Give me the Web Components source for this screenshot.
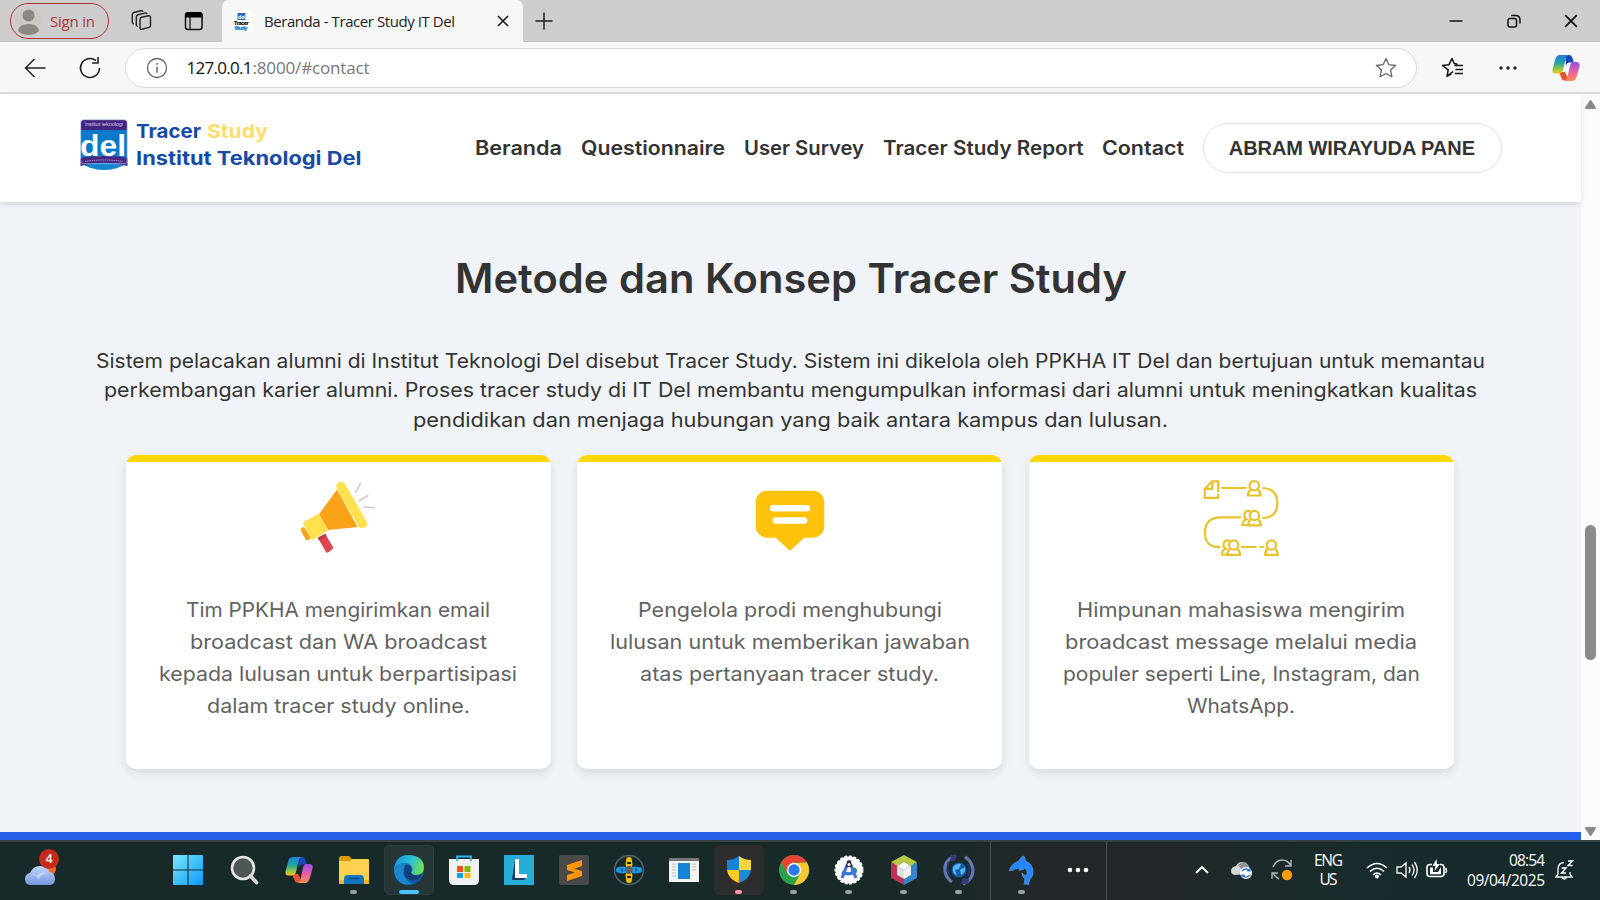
<!DOCTYPE html>
<html lang="id">
<head>
<meta charset="utf-8">
<title>Beranda - Tracer Study IT Del</title>
<style>
html,body{margin:0;height:100%;overflow:hidden}
body{font-family:"Inter","Open Sans",sans-serif;color:#333}
</style>
</head>
<body>
<desktop-screen></desktop-screen>
<script>
const icons = {
tabs:[24,24,`<g fill="none" stroke="#222" stroke-width="1.400" stroke-linejoin="round" stroke-linecap="round"><path d="M11.500 8.200l7-1.500q2-.3 2 1.700v8q0 1.500-1.500 2l-7 1.900q-2 .4-2-1.600v-8.300q0-1.800 1.500-2.200z"/><path d="M7.300 17.500q-1-.6-1-2V7.800q0-1.500 1.500-2l7-1.700q1.500-.3 2 .6M3.300 14.800q-1-.6-1-2V5.500q0-1.500 1.500-2l7-1.700q1.500-.3 2 .4"/></g>`],
pane:[20,20,`<rect x="1.500" y="2" width="16.500" height="16.500" rx="2.500" fill="none" stroke="#111" stroke-width="1.500"/><path d="M1 6.500V4q0-3 3-3h11.500q3 0 3 3v2.500z" fill="#000"/><path d="M6 6v12" stroke="#111" stroke-width="1.300"/>`],
fav:[20,20,`<path fill="#fff" d="M0 0h20v20H0z"/><rect x="5.500" y="2" width="8" height="7" fill="#2868bc"/><text x="6" y="7.500" font-size="5" font-weight="700" fill="#fff" font-family="Inter,sans-serif">del</text><text x="1.800" y="14" font-size="5.200" font-weight="900" textLength="15" fill="#111" font-family="Inter,sans-serif">Tracer</text><text x="2.500" y="18.500" font-size="5.200" font-weight="900" textLength="13" fill="#1576ca" font-family="Inter,sans-serif">Study</text>`],
close:[12,12,`<path d="M1 1l10 10M11 1L1 11" stroke="#111" stroke-width="1.500"/>`],
plus:[18,18,`<path d="M9 .5v17M.5 9h17" stroke="#222" stroke-width="1.500"/>`],
min:[14,14,`<path d="M.5 7h13" stroke="#111" stroke-width="1.500"/>`],
restore:[14,14,`<rect x="1" y="4.500" width="8.500" height="8.500" rx="2" fill="none" stroke="#111" stroke-width="1.500"/><path d="M4 1.500h4.500q4.500 0 4.500 4.500v3.500" fill="none" stroke="#111" stroke-width="1.500"/>`],
back:[22,22,`<path d="M10.500 2L1.500 11l9 9M2 11h19.500" fill="none" stroke="#222" stroke-width="1.500"/>`],
reload:[22,22,`<path d="M20.500 11A9.500 9.500 0 1 1 17 3.600M19 0v6h-6" fill="none" stroke="#222" stroke-width="1.600"/>`],
info:[22,22,`<circle cx="11" cy="11" r="9.500" fill="none" stroke="#666" stroke-width="1.300"/><path d="M11 9.700v6M11 6v1.700" stroke="#666" stroke-width="1.500"/>`],
star:[22,22,`<path d="M11 1.500l2.900 6.200 6.700.8-5 4.600 1.300 6.700-5.900-3.300-5.900 3.300 1.300-6.700-5-4.600 6.700-.8z" fill="none" stroke="#666" stroke-width="1.300" stroke-linejoin="round"/>`],
favs:[22,22,`<path d="M12 14.500l-6 4.800 1.200-6.500L1.500 8.500l6.500-.8L11 1.500l2.300 5 3.200.8M13.500 8.500H22M14.500 12.500H22M14 16.500h8M6 19.300l5-3" fill="none" stroke="#111" stroke-width="1.500" stroke-linejoin="round"/>`],
dots:[18,6,`<g fill="#222"><circle cx="2" cy="3" r="1.700"/><circle cx="9" cy="3" r="1.700"/><circle cx="16" cy="3" r="1.700"/></g>`],
dotsw:[22,6,`<g fill="#fff"><circle cx="3" cy="3" r="2.300"/><circle cx="11" cy="3" r="2.300"/><circle cx="19" cy="3" r="2.300"/></g>`],
copilot:[28,28,`<defs><linearGradient id="a" x1="0" y1="0" x2="0" y2="1"><stop offset="0" stop-color="#1e82dc"/><stop offset=".45" stop-color="#25a5a0"/><stop offset=".75" stop-color="#8fc742"/><stop offset="1" stop-color="#f4c51c"/></linearGradient><linearGradient id="b" x1="0" y1="0" x2="0" y2="1"><stop offset="0" stop-color="#9a50e8"/><stop offset=".45" stop-color="#df5dae"/><stop offset="1" stop-color="#ff8a52"/></linearGradient></defs><path d="M13 1h4.500q2 0 3 3l1.300 4.500H17q-2 0-3 3z" fill="#1848b8"/><path d="M7 18h6l2 4q1 4 4 4.500h-7q-2 0-2.800-3z" fill="#e5542f"/><path d="M8 1h8.500q-2 .5-3 4l-2.500 11q-1 3.500-4 3.500H3.500Q-.3 19.500.6 15L3.500 4.500Q4.500 1 8 1z" fill="url(#a)"/><path d="M20.500 8h4q3.500 0 3.200 4l-3 10.500Q23.500 27 19.500 27H11.500q3 0 4-4l2.500-11q1-4 2.500-4z" fill="url(#b)"/>`],
weather:[32,22,`<defs><linearGradient id="a" x1="0" y1="0" x2="0" y2="1"><stop stop-color="#c2d5fc"/><stop offset="1" stop-color="#7896dc"/></linearGradient></defs><circle cx="26" cy="5" r="6" fill="#f36b22"/><path d="M7 21q-6 0-6-6 0-5 5-6Q9 2 16 2q8 0 9.500 6Q31 9 31 15q0 6-6 6z" fill="url(#a)"/><path d="M6 10q5-1 7 2 3-5 10-3-7 1-8 6-4-5-9-5z" fill="#e4edff" opacity=".55"/>`],
start:[30,30,`<defs><linearGradient id="a" gradientUnits="userSpaceOnUse" x1="0" y1="0" x2="30" y2="30"><stop stop-color="#78e9ff"/><stop offset="1" stop-color="#0c98f8"/></linearGradient></defs><path d="M1 0h13.500v14.500H0V1q0-1 1-1zM15.500 0H29q1 0 1 1v13.500H15.500zM0 15.500h14.500V30H1q-1 0-1-1zM15.500 15.500H30V29q0 1-1 1H15.500z" fill="url(#a)"/>`],
search:[30,30,`<circle cx="14" cy="13" r="11" fill="#4e5756" stroke="#e5e5e5" stroke-width="2.600"/><path d="M21.500 21l6 6.500" stroke="#d8d8d8" stroke-width="3.800" stroke-linecap="round"/>`],
folder:[30,28,`<path d="M0 2q0-2 2-2h8l3 3-2 5H0z" fill="#d59b08"/><path d="M0 5h11l2-2h16q1 0 1 1v23q0 1-1 1H1q-1 0-1-1z" fill="#ffd151"/><path d="M0 24h30v3q0 1-1 1H1q-1 0-1-1z" fill="#f4b629"/><path d="M5 28v-5q0-4 4-4h12q4 0 4 4v5z" fill="#1474c4"/><path d="M9.500 22.500h11" stroke="#074582" stroke-width="1.300"/>`],
edge:[30,30,`<defs><linearGradient id="a" x1="0" y1=".2" x2="1" y2=".5"><stop stop-color="#1f98df"/><stop offset=".55" stop-color="#29bfd2"/><stop offset="1" stop-color="#6ee054"/></linearGradient><linearGradient id="b" x1="0" y1="0" x2="1" y2="1"><stop stop-color="#188bd5"/><stop offset="1" stop-color="#0c4f9e"/></linearGradient></defs><circle cx="15" cy="15" r="15" fill="url(#b)"/><path d="M.3 13Q2 0 15 0 30 1 30 13q-.5 7-8 7-5-.2-5-2.500 2-1.500 1.500-4Q17 8 11 8 3 8 .3 13z" fill="url(#a)"/><path d="M11 10q5-1 6.500 4-1 3 0 4 1 2.500 5 2.500 3 0 5-1.500 1 .5 0 2-5 6-12 4-6-3-5.500-9z" fill="#123f78"/><path d="M.3 13Q4 7 12 9.500 8 12 9 18q1.500 8 9 11Q7 31.500 2 23-.5 18 .3 13z" fill="#1a86cf"/>`],
store:[30,30,`<path d="M0 4h30v21q0 5-5 5H5q-5 0-5-5z" fill="#f1f1f1"/><path d="M8 6V1.500h14V6" fill="none" stroke="#32b3ee" stroke-width="1.800"/><path d="M8 11h6v6H8z" fill="#f25022"/><path d="M15.500 11h6v6h-6z" fill="#7fba00"/><path d="M8 18h6v5H8z" fill="#00a4ef"/><path d="M15.500 18h6v5h-6z" fill="#ffb900"/>`],
lbox:[30,30,`<path fill="#27add8" d="M0 0h30v30H0z"/><path d="M11 4l-3 21 4-3V5zM8 25h12l3-3H12z" fill="#173c62"/><path d="M11 4h4v15h8v4H11z" fill="#fff"/>`],
sublime:[30,30,`<rect width="30" height="30" rx="2" fill="#494949"/><path d="M8 10l15-5v6l-8 2.700 8 2.300v5L8 26v-6l8-2.500-8-2.500z" fill="#ff9800"/>`],
circle:[32,32,`<circle cx="16" cy="16" r="14.500" fill="none" stroke="#53666b" stroke-width="1.400"/><path d="M13.500 4q2.500-2 5 0l1 6-1 6 1 6-1 6q-2.500 2-5 0l-1-6 1-6-1-6z" fill="#ffbd0b"/><path d="M4 13.500l6-1 6 1 6-1 6 1q2 2.500 0 5l-6 1-6-1-6 1-6-1q-2-2.500 0-5z" fill="#169cef"/><circle cx="16" cy="16" r="4" fill="#5c6365"/><path d="M14 9h4M14 23h4" stroke="#222" stroke-width="1.800"/><path d="M9 14.500v3M23 14.500v3" stroke="#124e7c" stroke-width="1.800"/>`],
win:[30,24,`<path fill="#f4f4f4" d="M0 0h30v24H0z"/><path d="M0 0h30v3H0z" fill="#777"/><rect x="9" y="5" width="12" height="16" fill="#1684d4"/><path d="M3 6h4M3 9h4M3 12h4M3 15h4M3 18h4M23 6h4M23 9h4M23 12h4" stroke="#c0c0c0"/>`],
shield:[26,28,`<path d="M13 1v13H1V4q7 0 12-4z" fill="#1684d4"/><path d="M13 0q5 4 12 4v10H13z" fill="#ffd43d"/><path d="M1 14h12v13Q2 23 1 14z" fill="#ffc928"/><path d="M13 14h12q-1 9-12 13z" fill="#188ad8"/>`],
chrome:[30,30,`<circle cx="15" cy="15" r="15" fill="#2aa24c"/><path d="M2 7.500A15 15 0 0 1 28 7.500H15L9 19z" fill="#e64435"/><path d="M28 7.500A15 15 0 0 1 15 30l6.500-11.500L17 8z" fill="#fcc831"/><circle cx="15" cy="15" r="7.200" fill="#fff"/><circle cx="15" cy="15" r="5.700" fill="#287be7"/>`],
android:[30,30,`<circle cx="15" cy="15" r="13.500" fill="#fff" stroke="#fff" stroke-width="2" stroke-dasharray="3 1.500"/><circle cx="20" cy="15.500" r="3" fill="#1e9f60"/><path d="M15 5v3M13.500 9L8 23M16.500 9L22 23M8 17q7 4 14-1" stroke="#3e73d8" stroke-width="3.200" fill="none"/><path d="M13 6h4l1 6h-6z" fill="#333"/><circle cx="15" cy="9.500" r="1.500" fill="#fff"/>`],
netbeans:[28,30,`<path d="M14 0l13 7-6 4-7-4-7 4-6-4z" fill="#b4ca43"/><path d="M1 7l6 4v9l7 4v6L1 23z" fill="#be3259"/><path d="M27 7l-6 4v9l-7 4v6l13-7z" fill="#3685cb"/><path d="M14 7l7 4-7 4-7-4z" fill="#fff"/><path d="M7 11l7 4v9l-7-4z" fill="#dde4dd"/><path d="M21 11l-7 4v9l7-4z" fill="#f4f4f4"/>`],
sphere:[32,32,`<path d="M12 2Q1 6 2 17q1 7 7 11M20 30q10-4 10-14Q29 7 22 3" fill="none" stroke="#6477ae" stroke-width="3.200"/><path d="M8 1h6l-2 6H7zM18 30h7l1-5-6-1z" fill="#3a3884"/><path d="M6 8q-3 7 1 14M25 10q3 7-1 13" fill="none" stroke="#26336b" stroke-width="2"/><circle cx="16" cy="16" r="7.500" fill="#145da6"/><path d="M10 13q4-5 8-3l-2 5-4 1 2 5q-5-1-4-8M17 16l5-3q1 6-4 8z" fill="#55b5f0"/>`],
dolphin:[28,32,`<path d="M1 16.500Q4 8 11 6.500q2-4.500 5-5.500 2 1 2 5 7 3 8 10 .5 6-3.500 9.500-.5 3-1.500 5.500-2-1.500-4.500-.5 1-3 1-6-3-1.500-3-6 2 3 4.500 3 2-4-1-8-2 2.500-7 2.500l1.500-2q-5-.5-7.500 2-2-.5-4 .5z" fill="#2588fc" stroke="#77adf2" stroke-width=".5"/>`],
chev:[16,12,`<path d="M2 9l6-6 6 6" fill="none" stroke="#fff" stroke-width="1.800"/>`],
cloud:[24,20,`<path d="M6 15q-5 0-5-4t5-5q2-4 6-4 5 0 7 5 2 2 1 6z" fill="#d5d5d5"/><path d="M8 5Q15-2 19 7l-7 3z" fill="#8e9292"/><circle cx="16" cy="13" r="6" fill="#fff"/><path d="M12 11q4-4 8 0M20 8v3h-3M20 15q-4 4-8 0M12 18v-3h3" stroke="#2374ce" stroke-width="1.200" fill="none"/>`],
sync:[24,24,`<path d="M3 9Q6 2 12 2q6 0 9 6M21 2v6h-6M9 21Q5 19 3 15M2 21v-6h6" fill="none" stroke="#aeb5b5" stroke-width="1.400"/><circle cx="17" cy="17" r="5.200" fill="#ff9d0a"/>`],
wifi:[24,20,`<g fill="none" stroke="#fff" stroke-width="1.500"><path d="M2 8q10-9 20 0M5 11.500q7-6.500 14 0M8 15q4-4 8 0"/></g><circle cx="12" cy="16.500" r="2" fill="#fff"/>`],
sound:[24,20,`<path d="M2 7h4l5-4v14l-5-4H2zM14 7q2 3 0 6M17 4.500q4 5.500 0 11M19.500 2q5.500 8 0 16" fill="none" stroke="#eee" stroke-width="1.400"/>`],
battery:[24,20,`<path d="M7 4.500H5Q2 4.500 2 7.500v6q0 3 3 3h11q3 0 3-3v-6q0-3-3-3h-1" fill="none" stroke="#fff" stroke-width="1.600"/><path d="M5 7.500h3V12h5l3-5v7.200H5z" fill="#fff"/><path d="M11.500-1L7.500 6h3l-1 5 5.500-7h-3z" fill="#fff"/><path d="M20.500 8q2 2.500 0 5" stroke="#fff" stroke-width="1.500" fill="none"/>`],
bell:[22,22,`<path d="M10 3.500q-6 .5-6 6.500v5l-2 3h16l-2-3v-2M7.500 18q2.500 4 5.500 0" fill="none" stroke="#eee" stroke-width="1.400"/><path d="M7.500 9H12l-4.500 5H12M14 2h4.500L14 6.500h4.500" stroke="#fff" stroke-width="1.400" fill="none"/>`],
user:[25,29,`<circle cx="12.500" cy="14" r="13" fill="#cbc8c5"/><circle cx="12.500" cy="9.500" r="6" fill="#8c8782"/><path d="M2 25q1-7 10.500-7T23 25q-4 4-10.500 4T2 25z" fill="#8c8782"/>`],
logo:[48,52,`<defs><clipPath id="c"><path d="M1 4q0-3 3-3h40q3 0 3 3v40q-10 7-23 7T1 44z"/></clipPath></defs><g clip-path="url(#c)"><path fill="#0879ca" d="M0 0h48v52H0z"/><path fill="#432580" d="M0 0h48v11H0z"/><text x="5" y="7.400" font-size="5.500" textLength="38" fill="#d5c7ee" font-family="Liberation Sans,sans-serif">institut teknologi</text><text x="0" y="36.500" font-size="30" font-weight="700" textLength="46" lengthAdjust="spacingAndGlyphs" fill="#fff" font-family="Liberation Sans,sans-serif">del</text><path d="M0 43q24-12 48 0v9H0z" fill="#cfeafa"/><path d="M1 44q23-7 46 0l-2 7H2z" fill="#1586ce"/></g><path d="M.5 39q23.500-4 47 0v8q-23.500-7-47 0z" fill="#482580"/><path d="M5 42.500q19-3 38 0" fill="none" stroke="#c9b9e5" stroke-width=".8" stroke-dasharray="1.500 .7"/><rect x=".7" y=".7" width="46.500" height="44" rx="3" fill="none" stroke="#9ab6db" stroke-width=".8"/>`],
megaphone:[80,80,`<path d="M2.500 51q0-2 3.500-3l7 11q-3 3-5 2z" fill="#faa218"/><path d="M19.800 58.700l7.400-4 8 13.800q.5 1-5.200 5-1.500.5-2-.5z" fill="#dc4652"/><path d="M19.800 58.700l7.400-4 1.500 2.500-7.300 4z" fill="#b83c48"/><path d="M5.500 45q-1-1.300 1-2.500l12.500-7 2.500-.5 8.700 16-13 8.500q-3 2-4 0z" fill="#ffe14d"/><path d="M39 10.500L59.500 48l-29.300 3-9-16z" fill="#faa218"/><path d="M43 7.500l21.300 37" stroke="#ffe14d" stroke-width="9.500" stroke-linecap="round"/><path d="M57.500 14l5.300-10.300M60.800 22l9.400-5.700M65.200 28l12 .7" stroke="#ccced7" stroke-width="1.600"/>`],
bubble:[80,80,`<rect x="5.700" y="11.700" width="68.600" height="47" rx="11.500" fill="#ffc20a"/><path d="M25 58h30l-13.400 12.400q-1.600 1.200-3.200 0z" fill="#ffc20a"/><path d="M23 29.200h34M25.800 41.500h28.400" stroke="#fff" stroke-width="6.400" stroke-linecap="round"/>`],
flow:[80,80,`<g fill="none" stroke="#e9c12d" stroke-width="2.200"><path d="M17.200 13V2.300h-6L3.800 9.800v9h13.400v-4M11.300 2.300v7.500H3.800M20.300 9h25.300M61.400 9q15 .5 15 15t-15 15M40 38.300H20Q4 38.300 4 53.500T19.200 68M40 68h15.600M58.500 68h5"/>
<g id="p"><circle cx="53.200" cy="6.700" r="4.700"/><path d="M49.500 11q-2.500 1.500-2.500 5.500h12.500q0-4-2.500-5.500"/></g>
<use href="#p" x="17.200" y="59.300"/><use href="#p" x=".2" y="29.800"/><use href="#p" x="-20.500" y="59.300"/><path d="M49.500 32.500q-4-2-6 2-1 4 2 6-4 1-4 5.500h6M28.800 62q-4-2-6 2-1 4 2 6-4 1-4 5.500h6"/></g>`]
};

class Base extends HTMLElement{
  constructor(){super();this.attachShadow({mode:'open'})}
  connectedCallback(){this.shadowRoot.innerHTML='<style>*{box-sizing:border-box}'+this.css()+'</style>'+this.html()}
}
class UiIcon extends Base{
  css(){const s=icons[this.getAttribute('name')],w=+(this.getAttribute('w')||s[0]);return`:host{display:block;flex:none;width:${w}px;height:${w*s[1]/s[0]}px}svg{display:block;width:100%;height:100%;overflow:visible}`}
  html(){const s=icons[this.getAttribute('name')];return`<svg viewBox="0 0 ${s[0]} ${s[1]}">${s[2]}</svg>`}
}
class BrowserTabs extends Base{
  css(){return`:host{display:flex;height:42px;background:#cdcdcd;font:15px "Open Sans",sans-serif;color:#222;align-items:center;border-bottom:1px solid #c2c2c2}
  .sign{display:flex;align-items:center;gap:9px;margin-left:10px;width:99px;height:36px;border:1.500px solid #b0343a;border-radius:18px;padding-left:5px;color:#b0343a}
  .t1{margin-left:21px}.t2{margin-left:30px}
  .tab{display:flex;align-items:center;height:42px;margin:0 0 -1px 18px;background:#f7f7f7;width:301px;border-radius:7px 7px 0 0;padding:0 14px 0 10px}
  .tab fit-text{margin-left:12px}.tab ui-icon:last-child{margin-left:auto}
  .plus{margin-left:12px}.sp{flex:1}.w{display:flex;gap:43.500px;margin-right:22px}`}
  html(){return`<div class="sign"><ui-icon name="user"></ui-icon><fit-text w="45">Sign in</fit-text></div><ui-icon class="t1" name="tabs"></ui-icon><ui-icon class="t2" name="pane"></ui-icon><div class="tab"><ui-icon name="fav"></ui-icon><fit-text w="191">Beranda - Tracer Study IT Del</fit-text><ui-icon name="close"></ui-icon></div><ui-icon class="plus" name="plus"></ui-icon><span class="sp"></span><div class="w"><ui-icon name="min"></ui-icon><ui-icon name="restore"></ui-icon><ui-icon name="close" w="14"></ui-icon></div>`}
}
class BrowserBar extends Base{
  css(){return`:host{display:flex;align-items:center;height:52px;background:#f7f7f7;border-bottom:2px solid #dcdcdc;padding:1px 0 0 24px;font:17px "Open Sans",sans-serif;color:#111}
  .re{margin-left:33px}
  .addr{display:flex;align-items:center;margin-left:24px;width:1292px;height:40px;border:1.500px solid #d8d8d8;border-radius:20px;background:#fff;padding:0 19px 0 20px}
  .addr fit-text:nth-of-type(1){margin-left:18.500px}.g{color:#777}.addr ui-icon:last-child{margin-left:auto}
  .f{margin-left:24px}.d{margin-left:36px}.c{margin-left:35px}`}
  html(){return`<ui-icon name="back"></ui-icon><ui-icon class="re" name="reload"></ui-icon><div class="addr"><ui-icon name="info"></ui-icon><fit-text w="66">127.0.0.1</fit-text><fit-text class="g" w="117">:8000/#contact</fit-text><ui-icon name="star"></ui-icon></div><ui-icon class="f" name="favs"></ui-icon><ui-icon class="d" name="dots"></ui-icon><ui-icon class="c" name="copilot"></ui-icon>`}
}
class SiteHeader extends Base{
  css(){return`:host{display:flex;align-items:center;height:108px;flex:none;background:#fff;padding:0 79.500px 0 80px;box-shadow:0 2px 5px #0000001f;position:relative;z-index:1}
  .brand,.logo{margin-bottom:7px}
  .brand{font-weight:700;font-size:19px;line-height:27px;color:#164ba5;margin-left:8px}.brand div{display:flex;gap:6px;height:27px}.y{color:#fcdc6d}
  nav{display:flex;gap:19px;margin-left:auto;align-items:center;font-weight:600;font-size:19.500px}
  .btn{display:flex;align-items:center;justify-content:center;width:298.500px;height:50px;border:1px solid #e2e2e2;border-radius:25px;font:700 20px "Liberation Sans",sans-serif}`}
  html(){return`<ui-icon class="logo" name="logo"></ui-icon><div class="brand"><div><fit-text x w="65">Tracer</fit-text><fit-text x class="y" w="61">Study</fit-text></div><div><fit-text x w="225.500">Institut Teknologi Del</fit-text></div></div><nav><fit-text x w="87">Beranda</fit-text><fit-text x w="144">Questionnaire</fit-text><fit-text x w="120">User Survey</fit-text><fit-text x w="200.500">Tracer Study Report</fit-text><fit-text x w="82">Contact</fit-text><div class="btn"><fit-text w="247">ABRAM WIRAYUDA PANE</fit-text></div></nav>`}
}
class StudyCard extends Base{
  css(){return`:host{display:flex;flex-direction:column;align-items:center;width:425px;height:314px;background:linear-gradient(#fdd708 7px,#fff 7px);border-radius:10px;box-shadow:0 4px 10px #0000001c;padding-top:24px;gap:35px;box-sizing:border-box}
  .t{display:flex;flex-direction:column;align-items:center;font-size:20px;line-height:32px;color:#626262}`}
  html(){return`<ui-icon name="${this.getAttribute('icon')}"></ui-icon><div class="t"><slot></slot></div>`}
}
class MethodSection extends Base{
  css(){return`:host{display:flex;flex-direction:column;align-items:center;flex:1;background:#f0f3f8;border-bottom:8px solid #2460ea}
  h2{margin:52px 0 0;font-size:40.500px;line-height:50px;font-weight:600;height:50px}
  .p{display:flex;flex-direction:column;align-items:center;font-size:19.700px;line-height:29.300px;margin-top:43px;height:108px}
  .cards{display:flex;gap:26.500px;margin-right:2px}`}
  html(){const L=a=>a.map(([t,w])=>`<fit-text x w="${w}">${t}</fit-text>`).join('');return`<h2><fit-text x w="672">Metode dan Konsep Tracer Study</fit-text></h2><div class="p">${L([['Sistem pelacakan alumni di Institut Teknologi Del disebut Tracer Study. Sistem ini dikelola oleh PPKHA IT Del dan bertujuan untuk memantau',1389],['perkembangan karier alumni. Proses tracer study di IT Del membantu mengumpulkan informasi dari alumni untuk meningkatkan kualitas',1373],['pendidikan dan menjaga hubungan yang baik antara kampus dan lulusan.',755]])}</div><div class="cards"><study-card icon="megaphone">${L([['Tim PPKHA mengirimkan email',304],['broadcast dan WA broadcast',297],['kepada lulusan untuk berpartisipasi',358],['dalam tracer study online.',263]])}</study-card><study-card icon="bubble">${L([['Pengelola prodi menghubungi',304],['lulusan untuk memberikan jawaban',360],['atas pertanyaan tracer study.',299]])}</study-card><study-card icon="flow">${L([['Himpunan mahasiswa mengirim',328],['broadcast message melalui media',352],['populer seperti Line, Instagram, dan',357],['WhatsApp.',108]])}</study-card></div>`}
}
class ScrollBar extends Base{
  css(){return`:host{display:flex;flex-direction:column;align-items:center;width:19px;background:#fbfbfb;padding:5px 0 3px}i{width:11px;height:135px;border-radius:6px;background:#8b8b8b}.a{flex:0 0 416px}.b{flex:1}svg{flex:none;display:block}`}
  html(){return`<svg width="13" height="10"><path d="M2 9h9L6.500 2z" fill="#888" stroke="#888" stroke-width="2" stroke-linejoin="round"/></svg><span class="a"></span><i></i><span class="b"></span><svg width="13" height="11"><path d="M2 2h9L6.500 9z" fill="#888" stroke="#888" stroke-width="2" stroke-linejoin="round"/></svg>`}
}
class TaskSlot extends Base{
  css(){return`:host{display:grid;place-items:center;width:55px;height:50px;position:relative;flex:none}:host([wide]){width:57px}:host([active])::before{content:"";position:absolute;inset:0 2.500px;border-radius:5px;background:#263636;border:1px solid #2f3f3e}:host([alert])::before{background:#2d2d2e;border-color:#2d2d2e}ui-icon{position:relative}b{position:absolute;bottom:1px;width:7px;height:4px;border-radius:2px;background:#9a9f9f}b.on{width:20px;background:#4cc2ff}b.red{background:#ff99a4}`}
  html(){const r=this.getAttribute('run');return`<ui-icon name="${this.getAttribute('icon')}" w="${this.getAttribute('w')||30}"></ui-icon>${r===null?'':`<b class="${r}"></b>`}`}
}
class TaskBar extends Base{
  css(){return`:host{display:flex;height:60px;flex:none;box-sizing:border-box;align-items:center;background:linear-gradient(90deg,#182b2a,#172928 35%,#192a29 58%,#222829 64%,#222829 74%,#192b2b 82%,#172a2b);border-top:2px solid #35423f;padding-bottom:2px;color:#fff;font:15.500px "Open Sans",sans-serif}
  .we{width:159px;height:56px;padding:22px 0 0 24px;position:relative}.n{position:absolute;left:39px;top:7px;width:20px;height:20px;border-radius:50%;background:#c42b1c;text-align:center;font:600 12.500px/20px "Open Sans",sans-serif}
  hr{border:0;width:1px;height:58px;background:#4b5352;margin:0 0 -2px}.d1{margin-left:4px}.d2{margin-left:1px}
  .dol{margin-left:2px}
  .x{margin-left:87px}.c{margin-left:20px}.s{margin-left:16px}
  .tx{display:flex;flex-direction:column;align-items:center;line-height:20px}.lg{margin-left:20px;width:29px;line-height:19px}
  .wi{margin-left:22px}.so{margin-left:6px}.ba{margin-left:6px}.clk{margin-left:18px;width:78px;align-items:flex-end}.be{margin-left:9px}`}
  html(){return`<div class="we"><ui-icon name="weather"></ui-icon><span class="n">4</span></div><task-slot wide icon="start"></task-slot><task-slot icon="search"></task-slot><task-slot icon="copilot" w="28"></task-slot><task-slot icon="folder" run></task-slot><task-slot active icon="edge" run="on"></task-slot><task-slot icon="store"></task-slot><task-slot icon="lbox"></task-slot><task-slot icon="sublime"></task-slot><task-slot icon="circle" w="32"></task-slot><task-slot icon="win"></task-slot><task-slot active alert icon="shield" w="26" run="red"></task-slot><task-slot icon="chrome" run></task-slot><task-slot icon="android" run></task-slot><task-slot icon="netbeans" w="28" run></task-slot><task-slot icon="sphere" w="32" run></task-slot><hr class="d1"><task-slot class="dol" icon="dolphin" w="27" run wide></task-slot><task-slot icon="dotsw" w="22"></task-slot><hr class="d2"><ui-icon class="x" name="chev"></ui-icon><ui-icon class="c" name="cloud"></ui-icon><ui-icon class="s" name="sync"></ui-icon><div class="tx lg"><fit-text w="29">ENG</fit-text><fit-text w="18">US</fit-text></div><ui-icon class="wi" name="wifi"></ui-icon><ui-icon class="so" name="sound"></ui-icon><ui-icon class="ba" name="battery"></ui-icon><div class="tx clk"><fit-text w="36">08:54</fit-text><fit-text w="78">09/04/2025</fit-text></div><ui-icon class="be" name="bell"></ui-icon>`}
}
class DesktopScreen extends Base{
  css(){return`:host{display:flex;flex-direction:column;width:1600px;height:900px;overflow:hidden}.view{display:flex;flex:1;min-height:0}.page{display:flex;flex-direction:column;flex:1;min-width:0}`}
  html(){return`<browser-tabs></browser-tabs><browser-bar></browser-bar><div class="view"><div class="page"><site-header></site-header><method-section></method-section></div><scroll-bar></scroll-bar></div><task-bar></task-bar>`}
}
/* Sets a line of text to a given width: by tracking, or with the x attribute by widening its letters. */
const ctx=document.createElement('canvas').getContext('2d');
class FitText extends Base{
  css(){return':host{display:inline-block;white-space:nowrap;flex:none}span{display:inline-block;transform-origin:0 50%}'}
  html(){return'<span><slot></slot></span>'}
  connectedCallback(){
    super.connectedCallback();
    const c=getComputedStyle(this),t=this.textContent,w=+this.getAttribute('w');
    ctx.font=`${c.fontWeight} ${c.fontSize} ${c.fontFamily}`;
    const n=ctx.measureText(t).width,span=this.shadowRoot.querySelector('span');
    this.style.width=w+'px';
    if(this.hasAttribute('x'))span.style.transform=`scaleX(${w/n})`;
    else span.style.letterSpacing=(w-n)/(t.length-1)+'px';
  }
}
const reg={'desktop-screen':DesktopScreen,'browser-tabs':BrowserTabs,'browser-bar':BrowserBar,'site-header':SiteHeader,'method-section':MethodSection,'study-card':StudyCard,'scroll-bar':ScrollBar,'task-bar':TaskBar,'task-slot':TaskSlot,'ui-icon':UiIcon,'fit-text':FitText};
for(const k in reg)customElements.define(k,reg[k]);
</script>
</body>
</html>
